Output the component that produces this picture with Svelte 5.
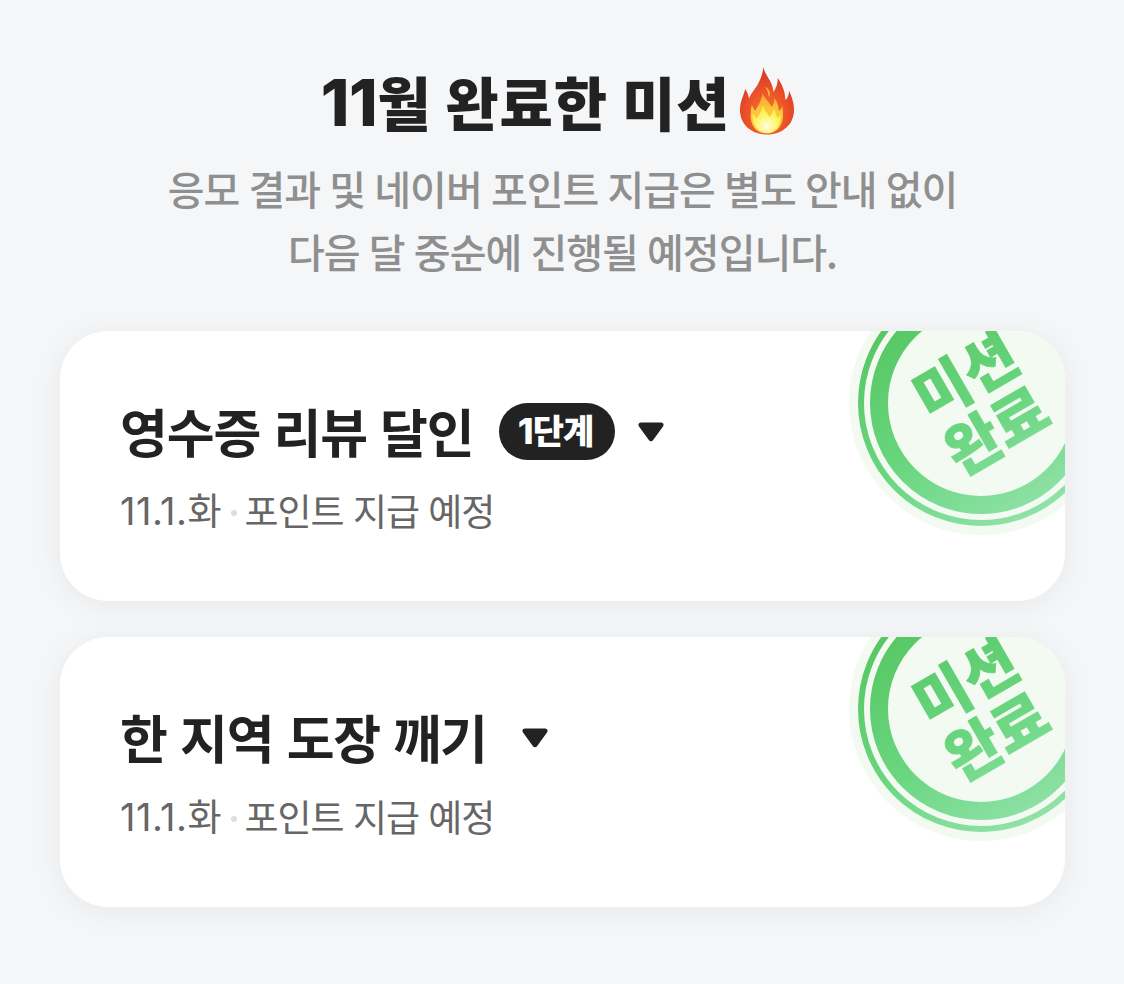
<script lang="ts">
  interface Mission {
    id: number;
    title: string;
    step?: number;
    date: string;
    status: string;
  }

  const month = 11;

  const missions: Mission[] = [
    { id: 1, title: '영수증 리뷰 달인', step: 1, date: '11.1.', status: '포인트 지급 예정' },
    { id: 2, title: '한 지역 도장 깨기', date: '11.1.', status: '포인트 지급 예정' },
  ];
</script>

<main class="page">
  <header class="intro">
    <h1>
      <span class="heading"><span class="num">{month}</span>월 완료한 미션</span>
      <svg class="fire" viewBox="0 0 54 68" aria-hidden="true">
        <defs>
          <radialGradient id="flame" cx="0.5" cy="0.7" r="0.62">
            <stop offset="0" stop-color="#f47a2c" />
            <stop offset="0.55" stop-color="#ee5429" />
            <stop offset="1" stop-color="#d93a22" />
          </radialGradient>
          <linearGradient id="core" x1="0" y1="0" x2="0" y2="1">
            <stop offset="0" stop-color="#f8a035" />
            <stop offset="0.4" stop-color="#fbc53a" />
            <stop offset="1" stop-color="#fbd046" />
          </linearGradient>
          <radialGradient id="glow" cx="0.5" cy="0.75" r="0.62">
            <stop offset="0" stop-color="#fffde0" />
            <stop offset="0.4" stop-color="#fff98e" />
            <stop offset="1" stop-color="#fdee3f" />
          </radialGradient>
        </defs>
        <path
          fill="url(#flame)"
          d="M23.4 0C24.5 8 32.8 14 33.5 25C36.4 21 37.7 16 37.8 11C41 16 45.5 24 45.3 33C48 31 49 27 49 23.5C51.6 29 54 36 54 43C54 57 43 67.5 27 67.5C11 67.5 0 57 0 43C0 35 3.5 28.5 5.3 22C7.2 25 8.3 28 9.1 31.5C11 26 15.5 22 18.5 16C21.3 10.5 23 5.5 23.4 0Z"
        />
        <path
          fill="url(#core)"
          d="M22.5 26C24 31 29 34 31.5 40C33.5 38 34.3 35 34.5 31C37.5 35 38.5 40 39 44C40.5 43 41.5 41 42.2 39C43 44 43.5 48 42.5 53C41 61 35 66.5 27 66.5C18 66.5 12.5 61 11 53C10.2 48 10.8 43 11.7 38C13 40 14 42 15 44C18 39 22 33 22.5 26Z"
        />
        <path
          fill="url(#glow)"
          d="M22.5 38C23.5 42 26.5 45 29.5 50C31.5 48 33 45 33.5 42C35.5 45 36.5 48 37 51C38.5 50 39.5 49 41 47C41 58 36 66 27 66C18 66 12.5 58 12.5 47C14.5 49 15.5 50 16.5 52C19 48 22 44 22.5 38Z"
        />
        <path fill="#fcb93b" d="M25 20C29.5 22 31 26 29 30.5C28.3 26 27.5 23 25 20Z" />
      </svg>
    </h1>
    <p>응모 결과 및 네이버 포인트 지급은 별도 안내 없이<br />다음 달 중순에 진행될 예정입니다.</p>
  </header>

  <ul class="missions">
    {#each missions as mission (mission.id)}
      <li class="card">
        <div class="title-row">
          <h2>{mission.title}</h2>
          {#if mission.step}
            <span class="badge"><span class="num">{mission.step}</span>단계</span>
          {/if}
          <svg class="arrow" viewBox="0 0 26 20" aria-hidden="true">
            <path
              d="M3 0.5H23C25.4 0.5 26.3 2.8 25 4.6L15.2 18C14 19.7 12 19.7 10.8 18L1 4.6C-0.3 2.8 0.6 0.5 3 0.5Z"
            />
          </svg>
        </div>
        <div class="meta">
          <span><span class="num">{mission.date}</span>화</span>
          <i class="dot"></i>
          <span>{mission.status}</span>
        </div>

        <svg class="stamp" viewBox="-132 -132 264 264" role="img" aria-label="미션 완료">
          <defs>
            <linearGradient
              id="stamp-{mission.id}"
              gradientUnits="userSpaceOnUse"
              x1="-62"
              y1="-90"
              x2="62"
              y2="122"
            >
              <stop offset="0" stop-color="#58c764" />
              <stop offset="0.5" stop-color="#69d67f" />
              <stop offset="1" stop-color="#95e3ad" />
            </linearGradient>
            <!-- the text rotates, so its gradient runs straight down -->
            <linearGradient
              id="stamp-text-{mission.id}"
              gradientUnits="userSpaceOnUse"
              x1="0"
              y1="-105"
              x2="0"
              y2="132"
            >
              <stop offset="0" stop-color="#58c764" />
              <stop offset="0.5" stop-color="#69d67f" />
              <stop offset="1" stop-color="#95e3ad" />
            </linearGradient>
          </defs>
          <circle r="132" fill="#f2faf2" />
          <circle r="120" fill="none" stroke="url(#stamp-{mission.id})" stroke-width="6" />
          <circle r="102" fill="none" stroke="url(#stamp-{mission.id})" stroke-width="18" />
          <g
            class="stamp-text"
            transform="rotate(-30)"
            fill="url(#stamp-text-{mission.id})"
            stroke="url(#stamp-text-{mission.id})"
          >
            <text x="0" y="-9.5">미션</text>
            <text x="-0.5" y="53.5">완료</text>
          </g>
        </svg>
      </li>
    {/each}
  </ul>
</main>

<style>
  :global(body) {
    margin: 0;
    background: #f5f6f8;
  }

  .page {
    box-sizing: border-box;
    width: 1124px;
    height: 984px;
    padding: 60px 59px 0 60px;
    overflow: hidden;
    font-family: 'Noto Sans CJK KR', sans-serif;
    color: #222;
  }

  .num {
    font-family: Inter, sans-serif;
  }

  .intro {
    height: 271px;
    text-align: center;
  }

  h1 {
    display: flex;
    justify-content: center;
    gap: 10px;
    height: 90px;
    margin: 0 10px 0 0;
    font-size: 58px;
    font-weight: 900;
    line-height: 82px;
    letter-spacing: 0.8px;
    white-space: nowrap;
  }

  h1 .num {
    font-size: 65px;
    line-height: 1;
    font-weight: 800;
    letter-spacing: -0.5px;
  }

  .fire {
    width: 54px;
    height: 68px;
    margin-top: 7px;
  }

  .intro p {
    margin: 7px 0 0;
    font-size: 40px;
    font-weight: 500;
    line-height: 63px;
    letter-spacing: -1px;
    word-spacing: 1.2px;
    color: #8f8f8f;
    white-space: nowrap;
  }

  .missions {
    display: flex;
    flex-direction: column;
    gap: 36px;
    margin: 0;
    padding: 0;
    list-style: none;
  }

  .card {
    position: relative;
    box-sizing: border-box;
    height: 270px;
    padding: 66px 60px 0;
    border-radius: 48px;
    background: #fff;
    box-shadow: 0 4px 32px rgba(0, 0, 0, 0.06);
  }

  .title-row {
    display: flex;
    align-items: center;
    height: 70px;
  }

  h2 {
    margin: -3px 0 0;
    font-size: 52px;
    font-weight: 700;
    line-height: 70px;
    letter-spacing: -1.1px;
    word-spacing: 2.5px;
    white-space: nowrap;
  }

  .badge {
    box-sizing: border-box;
    width: 116px;
    height: 57px;
    margin: -1px 0 0 25px;
    border-radius: 29px;
    background: #222;
    color: #fff;
    font-size: 34px;
    font-weight: 900;
    line-height: 53px;
    letter-spacing: -1px;
    text-indent: -2px;
    text-align: center;
    white-space: nowrap;
  }

  .badge .num {
    font-size: 36px;
    font-weight: 800;
  }

  .arrow {
    width: 26px;
    height: 20px;
    margin-left: 35px;
    fill: #222;
  }

  .badge + .arrow {
    margin-left: 23px;
  }

  .meta {
    display: flex;
    align-items: center;
    height: 50px;
    margin-top: 18px;
    font-size: 37px;
    font-weight: 400;
    line-height: 50px;
    letter-spacing: -1px;
    word-spacing: 2px;
    color: #666;
    white-space: nowrap;
  }

  .meta .num {
    font-size: 38px;
    letter-spacing: 0.5px;
  }

  .dot {
    width: 6px;
    height: 6px;
    margin: 6px 8px 0 10px;
    border-radius: 50%;
    background: #dedede;
  }

  .stamp {
    position: absolute;
    top: -60px;
    right: -48px;
    width: 264px;
    height: 264px;
    clip-path: inset(60px 48px 0 0 round 0 48px 0 0);
  }

  .stamp-text {
    font-size: 59px;
    font-weight: 900;
    letter-spacing: -0.5px;
    text-anchor: middle;
    stroke-width: 0.8px;
  }
</style>
